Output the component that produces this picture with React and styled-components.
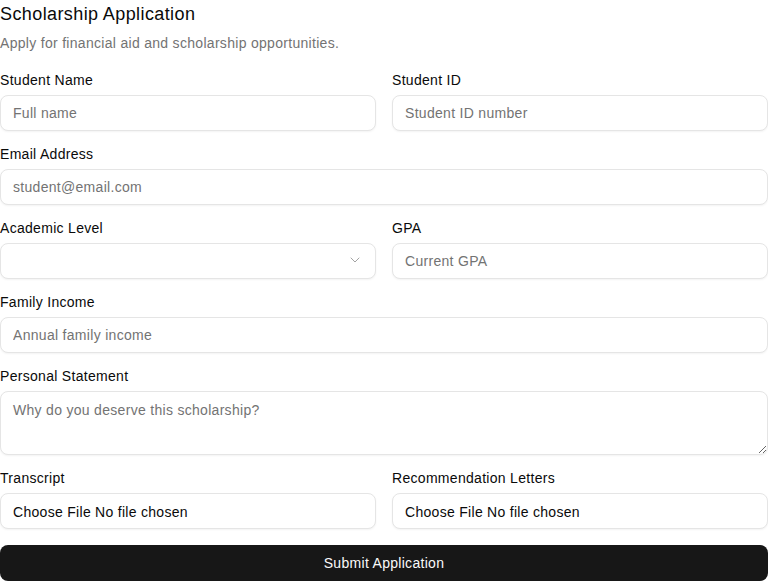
import React from "react";
import styled, { createGlobalStyle } from "styled-components";

const FONT = `"Liberation Sans", Arial, Helvetica, sans-serif`;

const Global = createGlobalStyle`
  html, body { margin: 0; padding: 0; background: #fff; }
  body { font-family: ${FONT}; color: #0a0a0a; letter-spacing: 0.3px; }
  * { box-sizing: border-box; }
`;

const Form = styled.form`
  width: 768px;
  display: flex;
  flex-direction: column;
  gap: 16px;
`;

const Header = styled.div`
  display: flex;
  flex-direction: column;
  gap: 5px;
  margin-bottom: 4px;
`;

const Title = styled.h2`
  margin: 0;
  font-size: 18px;
  line-height: 28px;
  font-weight: 400;
  letter-spacing: 0.4px;
  color: #0a0a0a;
`;

const Subtitle = styled.p`
  margin: 0;
  font-size: 14px;
  line-height: 20px;
  color: #737373;
`;

const Row = styled.div`
  display: grid;
  grid-template-columns: 1fr 1fr;
  gap: 16px;
`;

const Field = styled.div`
  display: flex;
  flex-direction: column;
  gap: 8px;
  min-width: 0;
`;

const Label = styled.label`
  font-size: 14px;
  line-height: 14px;
  color: #0a0a0a;
`;

const fieldBase = `
  width: 100%;
  border: 1px solid #e5e5e5;
  border-radius: 8px;
  background: #fff;
  box-shadow: 0 1px 2px rgba(0,0,0,0.05);
  font-family: ${FONT};
  font-size: 14px;
  letter-spacing: 0.3px;
  color: #0a0a0a;
  outline: none;
  &::placeholder { color: #737373; opacity: 1; }
`;

const Input = styled.input`
  ${fieldBase}
  height: 36px;
  padding: 4px 12px;
`;

const FileInput = styled.input.attrs({ type: "file" })`
  ${fieldBase}
  height: 36px;
  padding: 9px 12px 7px;
  line-height: 18px;
  &::file-selector-button {
    border: 0;
    background: transparent;
    padding: 0;
    margin: 0 4px 0 0;
    font: inherit;
    letter-spacing: 0.3px;
    color: #0a0a0a;
  }
`;

const TextArea = styled.textarea`
  ${fieldBase}
  height: 64px;
  padding: 8px 12px;
  line-height: 20px;
  display: block;
`;

const SelectWrap = styled.div`
  position: relative;
  height: 36px;
`;

const SelectBox = styled.select`
  ${fieldBase}
  height: 36px;
  padding: 4px 12px;
  appearance: none;
  -webkit-appearance: none;
`;

const Chevron = styled.svg`
  position: absolute;
  right: 13px;
  top: 9px;
  width: 16px;
  height: 16px;
  pointer-events: none;
`;

const Submit = styled.button`
  height: 36px;
  width: 100%;
  border: 0;
  border-radius: 8px;
  background: #171717;
  color: #fafafa;
  font-family: ${FONT};
  font-size: 14px;
  letter-spacing: 0.3px;
  font-weight: 400;
  cursor: pointer;
`;

export default function App() {
  return (
    <>
      <Global />
      <Form onSubmit={(e) => e.preventDefault()}>
        <Header>
          <Title>Scholarship Application</Title>
          <Subtitle>Apply for financial aid and scholarship opportunities.</Subtitle>
        </Header>
        <Row>
          <Field>
            <Label>Student Name</Label>
            <Input placeholder="Full name" />
          </Field>
          <Field>
            <Label>Student ID</Label>
            <Input placeholder="Student ID number" />
          </Field>
        </Row>
        <Field>
          <Label>Email Address</Label>
          <Input type="email" placeholder="student@email.com" />
        </Field>
        <Row>
          <Field>
            <Label>Academic Level</Label>
            <SelectWrap>
              <SelectBox defaultValue="">
                <option value=""></option>
                <option>Undergraduate</option>
                <option>Graduate</option>
              </SelectBox>
              <Chevron viewBox="0 0 24 24" fill="none" stroke="#a3a3a3" strokeWidth="1.5" strokeLinecap="round" strokeLinejoin="round">
                <path d="m6 9 6 6 6-6" />
              </Chevron>
            </SelectWrap>
          </Field>
          <Field>
            <Label>GPA</Label>
            <Input placeholder="Current GPA" />
          </Field>
        </Row>
        <Field>
          <Label>Family Income</Label>
          <Input placeholder="Annual family income" />
        </Field>
        <Field>
          <Label>Personal Statement</Label>
          <TextArea placeholder="Why do you deserve this scholarship?" />
        </Field>
        <Row>
          <Field>
            <Label>Transcript</Label>
            <FileInput />
          </Field>
          <Field>
            <Label>Recommendation Letters</Label>
            <FileInput />
          </Field>
        </Row>
        <Submit type="submit">Submit Application</Submit>
      </Form>
    </>
  );
}
